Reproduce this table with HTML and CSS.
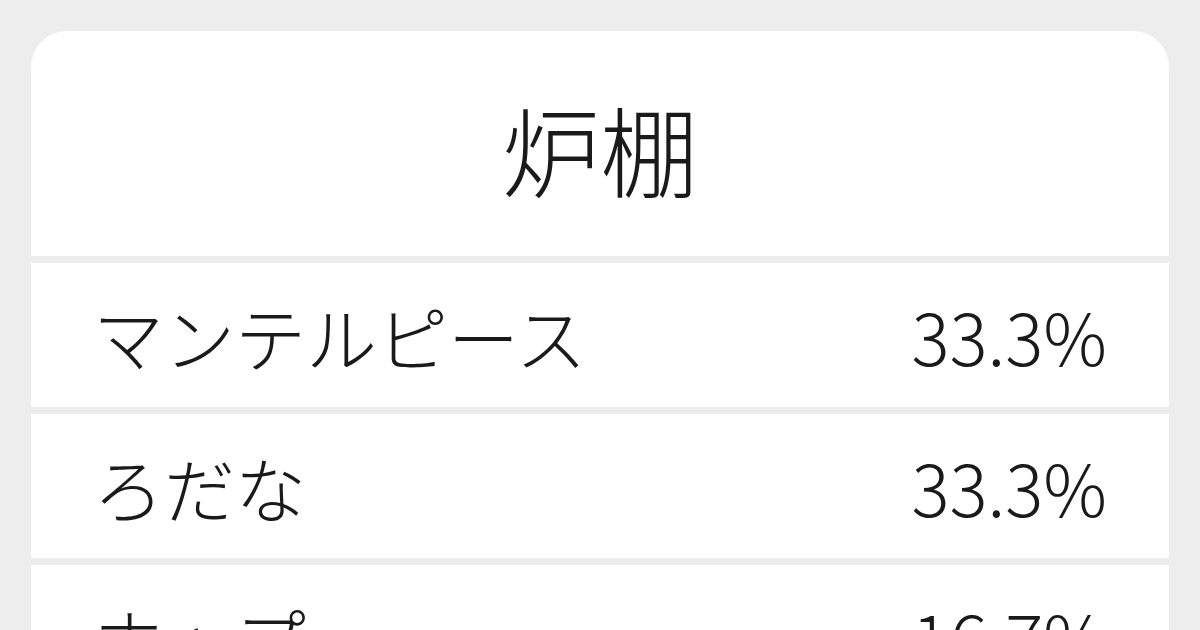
FILE: index.html
```html
<!DOCTYPE html>
<html lang="ja">
<head>
<meta charset="utf-8">
<link rel="stylesheet" href="styles.css">
</head>
<body>
<div class="card">
  <div class="title">炉棚</div>
  <div class="row"><span class="word">マンテルピース</span><span class="pct">33.3%</span></div>
  <div class="row"><span class="word">ろだな</span><span class="pct">33.3%</span></div>
  <div class="row"><span class="word">ホップ</span><span class="pct">16.7%</span></div>
</div>
</body>
</html>
```

FILE: styles.css
```css
html, body {
  margin: 0;
  padding: 0;
}
body {
  width: 1200px;
  height: 630px;
  overflow: hidden;
  background: #ededed;
  font-family: "Noto Sans CJK JP", "Noto Sans", sans-serif;
  color: #1a1a1a;
}
.card {
  margin: 31px 31px 0 31px;
  display: flex;
  flex-direction: column;
  gap: 7px;
}
.title {
  background: #fff;
  border-radius: 36px 36px 0 0;
  height: 225px;
  display: flex;
  align-items: center;
  justify-content: center;
  padding-top: 6px;
  box-sizing: border-box;
  font-size: 98px;
  font-weight: 300;
  line-height: 1;
}
.row {
  background: #fff;
  height: 144px;
  flex: none;
  display: flex;
  align-items: center;
  justify-content: space-between;
  padding: 0 62px 0 62px;
  font-size: 71px;
  font-weight: 300;
  line-height: 1;
}
```
